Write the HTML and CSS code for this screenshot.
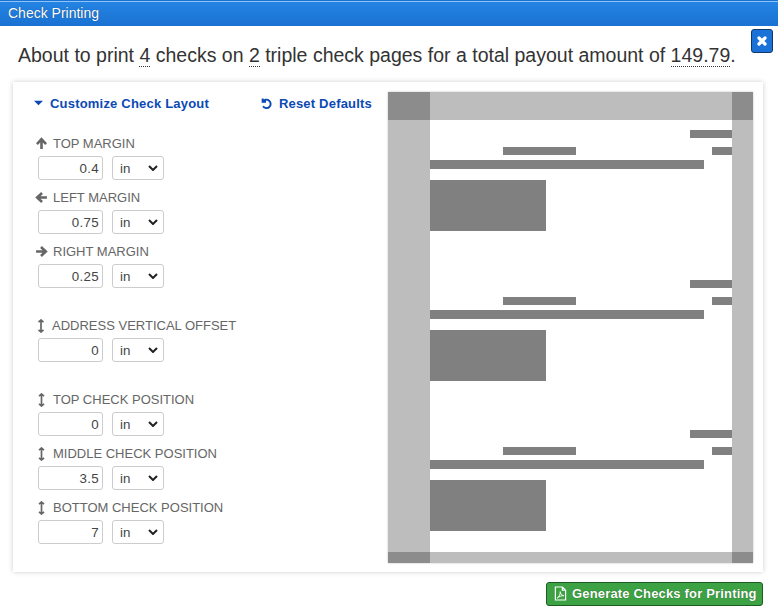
FILE: index.html
```html
<!DOCTYPE html>
<html lang="en">
<head>
  <meta charset="UTF-8">
  <title>Check Printing</title>
  <link rel="stylesheet" href="styles.css">
</head>
<body>
  <div class="titlebar">Check Printing</div>
  <button class="close-btn" aria-label="Close">
    <svg viewBox="0 0 12 12" width="12" height="12"><path d="M3 3L9 9M9 3L3 9" stroke="#fff" stroke-width="3.2" stroke-linecap="round"/></svg>
  </button>

  <p class="summary">About to print <span class="num">4</span> checks on <span class="num">2</span> triple check pages for a total payout amount of <span class="num">149.79</span>.</p>

  <div class="card">
    <div class="settings">
      <div class="settings-head">
        <a class="link">
          <svg class="caret" viewBox="0 0 10 6" width="9" height="6"><path d="M0 .5h10L5 5.5z" fill="#0b49b5"/></svg>
          Customize Check Layout
        </a>
        <a class="link">
          <svg viewBox="0 0 12 12" width="12" height="12"><path d="M2.6 1.4v3.4h3.4M2.9 4.6A4.2 4.2 0 1 1 3 9.3" fill="none" stroke="#0b49b5" stroke-width="1.9"/></svg>
          Reset Defaults
        </a>
      </div>

      <div class="group">
        <div class="field">
          <label><svg viewBox="0 0 12 12" width="13" height="13"><path d="M6 11V2.5M1.8 6.5L6 2l4.2 4.5" fill="none" stroke="#666" stroke-width="2.4"/></svg>Top Margin</label>
          <div class="inputs"><input value="0.4"><select><option>in</option><option>cm</option></select></div>
        </div>
        <div class="field">
          <label><svg viewBox="0 0 12 12" width="13" height="13"><path d="M11 6H2.5M6.5 1.8L2 6l4.5 4.2" fill="none" stroke="#666" stroke-width="2.4"/></svg>Left Margin</label>
          <div class="inputs"><input value="0.75"><select><option>in</option><option>cm</option></select></div>
        </div>
        <div class="field">
          <label><svg viewBox="0 0 12 12" width="13" height="13"><path d="M1 6h8.5M5.5 1.8L10 6l-4.5 4.2" fill="none" stroke="#666" stroke-width="2.4"/></svg>Right Margin</label>
          <div class="inputs"><input value="0.25"><select><option>in</option><option>cm</option></select></div>
        </div>
      </div>

      <div class="group">
        <div class="field">
          <label><svg viewBox="0 0 12 14" width="12" height="14"><path d="M6 1v12M3.5 3.2L6 1l2.500 2.200M3.500 10.800L6 13l2.500-2.200" fill="none" stroke="#666" stroke-width="1.7"/></svg>Address Vertical Offset</label>
          <div class="inputs"><input value="0"><select><option>in</option><option>cm</option></select></div>
        </div>
      </div>

      <div class="group">
        <div class="field">
          <label><svg viewBox="0 0 12 14" width="13" height="14"><path d="M6 1v12M3.5 3.2L6 1l2.500 2.200M3.500 10.800L6 13l2.500-2.200" fill="none" stroke="#666" stroke-width="1.7"/></svg>Top Check Position</label>
          <div class="inputs"><input value="0"><select><option>in</option><option>cm</option></select></div>
        </div>
        <div class="field">
          <label><svg viewBox="0 0 12 14" width="13" height="14"><path d="M6 1v12M3.5 3.2L6 1l2.500 2.200M3.500 10.800L6 13l2.500-2.200" fill="none" stroke="#666" stroke-width="1.7"/></svg>Middle Check Position</label>
          <div class="inputs"><input value="3.5"><select><option>in</option><option>cm</option></select></div>
        </div>
        <div class="field">
          <label><svg viewBox="0 0 12 14" width="13" height="14"><path d="M6 1v12M3.5 3.2L6 1l2.500 2.200M3.500 10.800L6 13l2.500-2.200" fill="none" stroke="#666" stroke-width="1.7"/></svg>Bottom Check Position</label>
          <div class="inputs"><input value="7"><select><option>in</option><option>cm</option></select></div>
        </div>
      </div>
    </div>

    <!-- page preview, drawn to scale -->
    <div class="preview">
      <div class="sheet">
        <div class="margin m-top"></div>
        <div class="margin m-left"></div>
        <div class="margin m-right"></div>
        <div class="margin m-bottom"></div>
        <div class="corner c-tl"></div>
        <div class="corner c-tr"></div>
        <div class="corner c-bl"></div>
        <div class="corner c-br"></div>

        <div class="check check-1">
          <div class="bar b-date"></div><div class="bar b-name"></div><div class="bar b-amount"></div><div class="bar b-line"></div><div class="bar b-address"></div>
        </div>
        <div class="check check-2">
          <div class="bar b-date"></div><div class="bar b-name"></div><div class="bar b-amount"></div><div class="bar b-line"></div><div class="bar b-address"></div>
        </div>
        <div class="check check-3">
          <div class="bar b-date"></div><div class="bar b-name"></div><div class="bar b-amount"></div><div class="bar b-line"></div><div class="bar b-address"></div>
        </div>
      </div>
    </div>
  </div>

  <div class="footer">
    <button class="generate-btn">
      <svg viewBox="0 0 14 16" width="13" height="15"><path d="M1.5 1H9l3.500 3.500V15h-11zM9 1v3.500h3.500" fill="none" stroke="#fff" stroke-width="1.300"/><path d="M3.500 12.800c2-1 3.500-4 3.200-6.800.3 2.500 1.500 4 3.800 4.300-2.500 0-5 1-7 2.500z" fill="none" stroke="#fff" stroke-width="1"/></svg>
      Generate Checks for Printing
    </button>
  </div>
</body>
</html>
```

FILE: styles.css
```css
html, body {
  height: 100%;
}
body {
  margin: 0;
  background: #fff;
  font-family: "Liberation Sans", Arial, sans-serif;
  color: #333;
  position: relative;
  overflow: hidden;
}
.titlebar {
  height: 25px;
  padding-left: 8px;
  line-height: 24px;
  font-size: 14px;
  color: #fff;
  background: linear-gradient(#2484e4, #1a72d2);
  border-top: 1px solid #1a72d2;
  box-shadow: inset 0 1px 0 #8cc4f7;
  text-shadow: 0 0 1px rgba(0, 0, 0, .5);
}
.close-btn {
  position: absolute;
  top: 29px;
  left: 751px;
  width: 22px;
  height: 24px;
  padding: 0;
  display: flex;
  align-items: center;
  justify-content: center;
  background: #1a72d8;
  border: 1px solid #12386b;
  border-radius: 3px;
}
.summary {
  margin: 0;
  padding: 16px 0 0 18px;
  height: 39px;
  line-height: 26px;
  font-size: 19.5px;
  white-space: nowrap;
}
.num {
  border-bottom: 1px dotted #333;
}
.card {
  margin: 1px 15px 0 13px;
  height: 490px;
  box-sizing: border-box;
  display: flex;
  justify-content: space-between;
  padding: 10px 10px 9px 20px;
  background: #fff;
  box-shadow: 0 0 5px rgba(0, 0, 0, .2);
}
.settings {
  width: 340px;
}
.settings-head {
  display: flex;
  justify-content: space-between;
  align-items: center;
  height: 22px;
  padding-right: 1px;
  margin-bottom: 21px;
}
.link {
  display: flex;
  align-items: center;
  gap: 7px;
  font-size: 13px;
  font-weight: bold;
  letter-spacing: .2px;
  color: #0b49b5;
}
.caret {
  margin-left: 1px;
}
.group {
  padding-left: 2px;
  margin-bottom: 20px;
}
.field {
  height: 54px;
}
.field label {
  display: flex;
  align-items: center;
  gap: 5px;
  height: 17px;
  margin-bottom: 4px;
  font-size: 13px;
  color: #666;
  text-transform: uppercase;
}
.inputs {
  display: flex;
  gap: 9px;
  padding-left: 3px;
}
.inputs input {
  width: 65px;
  height: 24px;
  box-sizing: border-box;
  padding: 0 3px;
  border: 1px solid #ccc;
  border-radius: 3px;
  text-align: right;
  font: 13.33px "Liberation Sans", Arial, sans-serif;
  letter-spacing: .3px;
  color: #444;
}
.inputs select {
  appearance: none;
  width: 52px;
  height: 24px;
  box-sizing: border-box;
  padding-left: 7px;
  border: 1px solid #ccc;
  border-radius: 3px;
  background: #fff url("data:image/svg+xml,%3Csvg xmlns='http://www.w3.org/2000/svg' viewBox='0 0 10 6'%3E%3Cpath d='M1 1l4 4 4-4' fill='none' stroke='%23222' stroke-width='2'/%3E%3C/svg%3E") no-repeat right 5px center / 10px 6px;
  font: 13.33px "Liberation Sans", Arial, sans-serif;
  color: #444;
}
.preview {
  width: 365px;
  height: 471px;
}
.sheet {
  position: relative;
  width: 100%;
  height: 100%;
  background: #fff;
  box-shadow: 0 0 2px rgba(0, 0, 0, .25);
}
.margin {
  position: absolute;
  background: #bdbdbd;
}
.m-top { top: 0; left: 0; right: 0; height: 28px; }
.m-bottom { bottom: 0; left: 0; right: 0; height: 11px; }
.m-left { top: 0; bottom: 0; left: 0; width: 42px; }
.m-right { top: 0; bottom: 0; right: 0; width: 21px; }
.corner {
  position: absolute;
  background: #8c8c8c;
}
.c-tl { top: 0; left: 0; width: 42px; height: 28px; }
.c-tr { top: 0; right: 0; width: 21px; height: 28px; }
.c-bl { bottom: 0; left: 0; width: 42px; height: 11px; }
.c-br { bottom: 0; right: 0; width: 21px; height: 11px; }
.check {
  position: absolute;
  left: 42px;
  width: 302px;
  height: 150px;
}
.check-1 { top: 28px; }
.check-2 { top: 178px; }
.check-3 { top: 328px; }
.bar {
  position: absolute;
  background: #808080;
}
.b-date { top: 10px; left: 260px; width: 42px; height: 8px; }
.b-name { top: 27px; left: 73px; width: 73px; height: 8px; }
.b-amount { top: 27px; left: 282px; width: 20px; height: 8px; }
.b-line { top: 40px; left: 0; width: 274px; height: 9px; }
.b-address { top: 60px; left: 0; width: 116px; height: 51px; }
.footer {
  display: flex;
  justify-content: flex-end;
  padding: 10px 15px 0 0;
}
.generate-btn {
  display: flex;
  align-items: center;
  gap: 5px;
  width: 217px;
  height: 24px;
  padding: 0 0 2px 7px;
  background: #3ca243;
  border: 1px solid #1d5c22;
  border-radius: 3px;
  color: #fff;
  font: bold 13px "Liberation Sans", Arial, sans-serif;
  letter-spacing: .17px;
  white-space: nowrap;
  text-shadow: 0 0 1px rgba(0, 0, 0, .5);
}
```
